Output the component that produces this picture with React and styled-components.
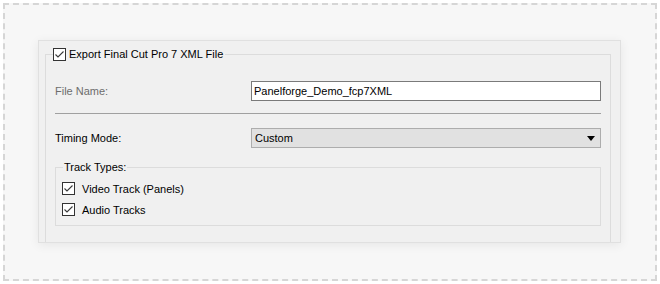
import React from "react";
import styled, { createGlobalStyle } from "styled-components";

const GlobalStyle = createGlobalStyle`
  html, body {
    margin: 0;
    padding: 0;
    background: #ffffff;
  }
  body {
    font-family: "Liberation Sans", Arial, sans-serif;
    font-size: 11px;
    color: #000;
  }
`;

const CheckBox = ({ checked }) => (
  <Box>
    {checked && (
      <svg width="11" height="11" viewBox="0 0 11 11">
        <polyline
          points="1.5,5.5 4,8 9.5,2.5"
          fill="none"
          stroke="#3a3a3a"
          strokeWidth="1.1"
        />
      </svg>
    )}
  </Box>
);

const App = () => {
  return (
    <Page>
      <GlobalStyle />
      <Frame>
        <Panel>
          <Group>
            <Legend>
              <CheckBox checked />
              <span>Export Final Cut Pro 7 XML File</span>
            </Legend>
            <Row first>
              <Label disabled>File Name:</Label>
              <TextInput>Panelforge_Demo_fcp7XML</TextInput>
            </Row>
            <Divider />
            <Row>
              <Label>Timing Mode:</Label>
              <Select>
                <span>Custom</span>
                <svg width="8" height="5" viewBox="0 0 8 5">
                  <polygon points="0,0 8,0 4,5" fill="#000" />
                </svg>
              </Select>
            </Row>
            <SubGroup>
              <SubLegend>Track Types:</SubLegend>
              <CheckRow>
                <CheckBox checked />
                <span>Video Track (Panels)</span>
              </CheckRow>
              <CheckRow>
                <CheckBox checked />
                <span>Audio Tracks</span>
              </CheckRow>
            </SubGroup>
          </Group>
        </Panel>
      </Frame>
    </Page>
  );
};

export default App;

const Page = styled.div`
  width: 660px;
  height: 284px;
  padding: 3px;
  box-sizing: border-box;
`;

const Frame = styled.div`
  box-sizing: border-box;
  width: 654px;
  height: 278px;
  border: 2px dashed #d6d6d6;
  background: #f7f7f7;
  padding: 35px 0 0 33px;
`;

const Panel = styled.div`
  box-sizing: border-box;
  width: 583px;
  height: 203px;
  background: #f0f0f0;
  border: 1px solid #e0e0e0;
  box-shadow: 0 2px 10px rgba(0, 0, 0, 0.07);
  padding: 0 9px 0 6px;
  overflow: hidden;
`;

const Group = styled.fieldset`
  margin: 6px 0 0;
  padding: 0 9px 40px 9px;
  border: 1px solid #dcdcdc;
  min-width: 0;
`;

const Legend = styled.legend`
  display: flex;
  align-items: center;
  gap: 3px;
  margin-left: -2px;
  padding: 0 2px 0 0;
  height: 14px;
  line-height: 14px;
`;

const Box = styled.span`
  box-sizing: border-box;
  width: 13px;
  height: 13px;
  border: 1px solid #333;
  background: #fff;
  display: inline-flex;
  align-items: center;
  justify-content: center;
  flex: none;
`;

const Row = styled.div`
  display: flex;
  align-items: center;
  height: 20px;
  margin-top: ${(p) => (p.first ? "20px" : "0")};
`;

const Label = styled.div`
  width: 196px;
  color: ${(p) => (p.disabled ? "#6d6d6d" : "#000")};
`;

const TextInput = styled.div`
  box-sizing: border-box;
  flex: 1;
  height: 20px;
  border: 1px solid #7a7a7a;
  background: #fff;
  padding: 0 2px;
  line-height: 18px;
`;

const Divider = styled.div`
  height: 1px;
  background: #a0a0a0;
  margin: 12px 0 14px;
`;

const Select = styled.div`
  box-sizing: border-box;
  flex: 1;
  height: 20px;
  border: 1px solid #adadad;
  background: #e1e1e1;
  padding: 0 5px 0 3px;
  display: flex;
  align-items: center;
  justify-content: space-between;
`;

const SubGroup = styled.fieldset`
  margin: 12px 0 0;
  padding: 4px 6px 5px 6px;
  border: 1px solid #dcdcdc;
  min-width: 0;
`;

const SubLegend = styled.legend`
  padding: 0 1px;
  margin-left: 1px;
  line-height: 14px;
`;

const CheckRow = styled.div`
  display: flex;
  align-items: center;
  gap: 7px;
  height: 21px;
`;
